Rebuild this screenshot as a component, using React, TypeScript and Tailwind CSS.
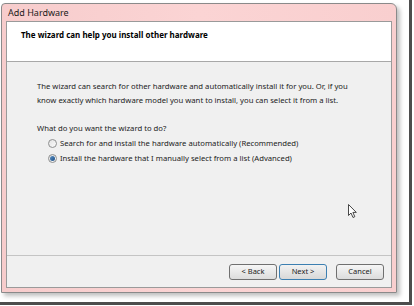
import React from 'react';

const font = { fontFamily: '"Noto Sans", "Open Sans", sans-serif' };

const Radio = ({ checked }: { checked?: boolean }) => (
  <span className="relative inline-flex h-[9px] w-[9px] shrink-0 items-center justify-center rounded-full border border-[#8e8f8f] bg-gradient-to-br from-[#e2e2e2] to-[#fbfbfb]">
    {checked && <span className="h-[5px] w-[5px] rounded-full bg-gradient-to-br from-[#5a8fc2] to-[#1d4f86]" />}
  </span>
);

const Button = ({ label, hot }: { label: string; hot?: boolean }) => (
  <button
    className={`flex h-[16px] w-[48px] items-center justify-center rounded-[3px] border text-[7.5px] text-[#222] ${
      hot ? 'border-[#3c7fb1] bg-gradient-to-b from-[#f2f2f2] to-[#d8d8d8]' : 'border-[#707070] bg-gradient-to-b from-[#f6f6f6] to-[#dcdcdc]'
    }`}
  >
    {label}
  </button>
);

export default function App() {
  return (
    <div className="h-[306px] w-[414px] overflow-hidden bg-white" style={font}>
      <div className="h-[305px] w-[412px] border-b-[3px] border-r-[3px] border-[#4d4d4d] bg-white pl-[1px] pt-[3px]">
        <div className="flex h-[290px] w-[396px] flex-col rounded-tr-[6px] rounded-tl-[4px] border border-[#8a8a8a] bg-gradient-to-r from-[#f7cccc] via-[#fbd4d4] to-[#f9cfcf] shadow-[3px_3px_4px_rgba(0,0,0,0.25)]">
          <div className="flex h-[17px] items-center pl-[6px] text-[9px] text-[#1a1a1a]">Add Hardware</div>
          <div className="mx-[4px] mb-[4px] flex flex-1 flex-col border border-[#9a9a9a] bg-[#f0f0f0]">
            <div className="h-[40px] border-b border-[#a8a8a8] bg-white pl-[14px] pt-[7px] text-[8px] font-bold text-black">
              The wizard can help you install other hardware
            </div>
            <div className="relative flex-1 pl-[30px] pt-[17px] text-[7.7px] leading-[14px] text-[#222]">
              <p>
                The wizard can search for other hardware and automatically install it for you. Or, if you
                <br />
                know exactly which hardware model you want to install, you can select it from a list.
              </p>
              <p className="mt-[14px]">What do you want the wizard to do?</p>
              <div className="mt-[1px] flex flex-col gap-[1px] pl-[11px]">
                <label className="flex items-center gap-[3px]">
                  <Radio />
                  <span>Search for and install the hardware automatically (Recommended)</span>
                </label>
                <label className="flex items-center gap-[3px]">
                  <Radio checked />
                  <span>Install the hardware that I manually select from a list (Advanced)</span>
                </label>
              </div>
              <svg className="absolute left-[341px] top-[142px]" width="9" height="15" viewBox="0 0 9 15">
                <path d="M0.5 0.5 L0.5 11.5 L3 9 L5 13.5 L6.8 12.7 L4.9 8.4 L8.3 8.4 Z" fill="#fff" stroke="#333" strokeWidth="0.9" strokeLinejoin="round" />
              </svg>
            </div>
            <div className="flex h-[32px] items-center justify-end border-t border-[#c4c4c4] pr-[7px]">
              <div className="flex gap-[2px]">
                <Button label="< Back" />
                <Button label="Next >" hot />
              </div>
              <div className="ml-[9px]">
                <Button label="Cancel" />
              </div>
            </div>
          </div>
        </div>
      </div>
    </div>
  );
}
